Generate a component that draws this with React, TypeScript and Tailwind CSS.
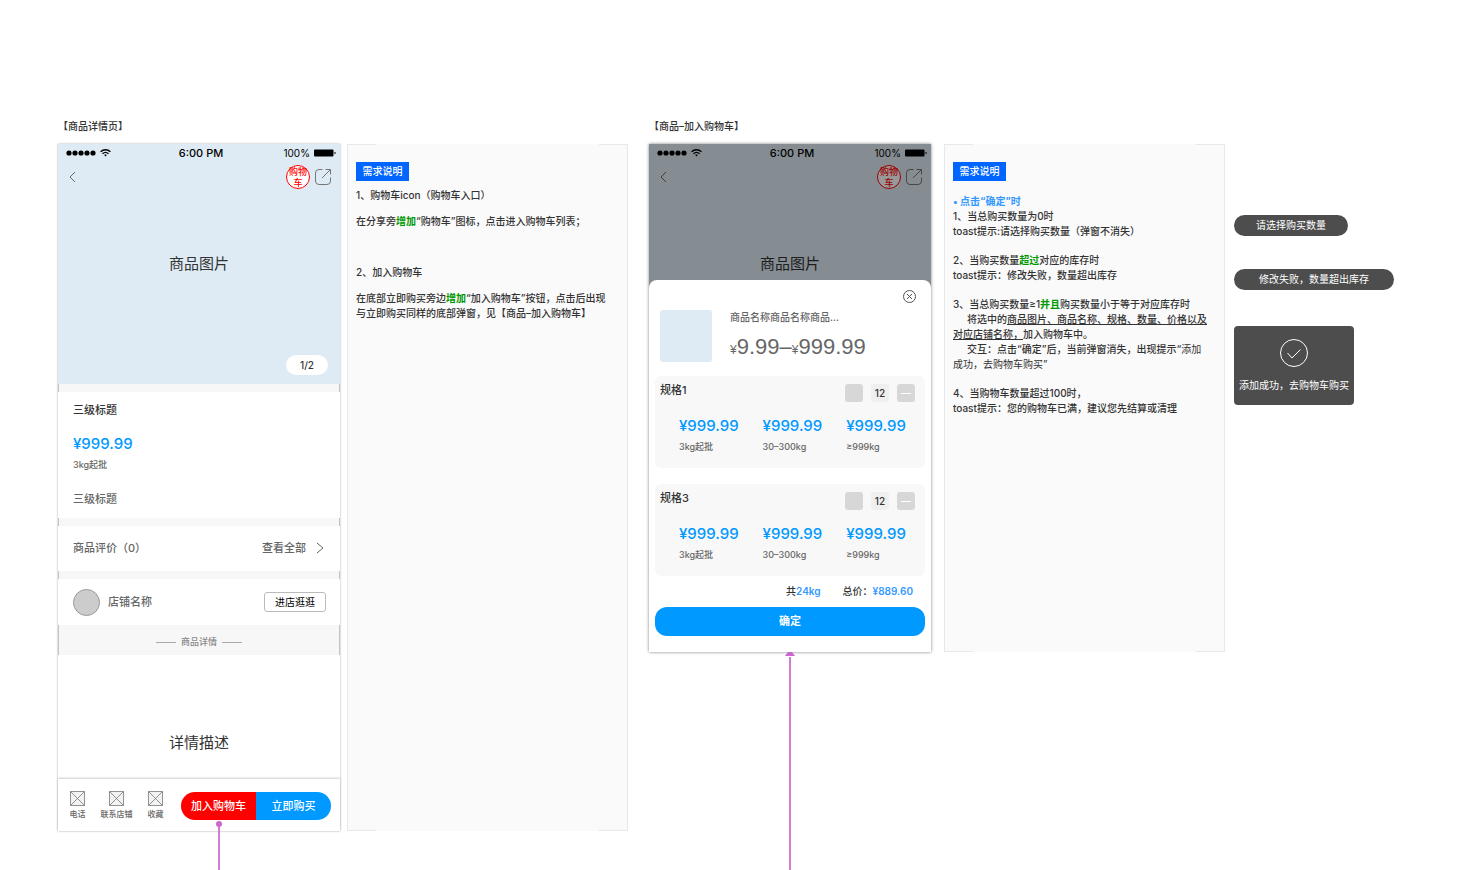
import type { ReactNode } from "react";

const tiers = [
  { price: "¥999.99", range: "3kg起批" },
  { price: "¥999.99", range: "30–300kg" },
  { price: "¥999.99", range: "≥999kg" },
];

const shortcuts = ["电话", "联系店铺", "收藏"];

function StatusBar() {
  return (
    <div className="grid h-[18px] grid-cols-3 items-center pl-2 pr-1 text-black">
      <div className="flex items-center gap-1">
        <svg width="30" height="6" viewBox="0 0 30 6" aria-hidden="true">
          {[3, 9, 15, 21, 27].map((cx) => (
            <circle key={cx} cx={cx} cy="3" r="2.6" />
          ))}
        </svg>
        <svg width="11" height="8" viewBox="0 0 11 8" fill="none" stroke="currentColor" strokeWidth="1.4" aria-hidden="true">
          <path d="M.6 2.7C3.4.1 7.6.1 10.4 2.7M2.5 4.7c1.8-1.6 4.2-1.6 6 0" />
          <path d="M4.2 6 5.5 7.6 6.8 6c-.8-.6-1.8-.6-2.6 0Z" fill="currentColor" stroke="none" />
        </svg>
      </div>
      <span className="text-center text-[11px] font-medium leading-[18px]">6:00 PM</span>
      <div className="flex items-center justify-end gap-1">
        <span className="text-[10px] font-normal leading-[18px]">100%</span>
        <svg width="22" height="8" viewBox="0 0 22 8" aria-hidden="true">
          <rect x="0" y="0.5" width="19.5" height="7" rx="1" />
          <rect x="20.5" y="3" width="1" height="2" />
        </svg>
      </div>
    </div>
  );
}

function Hero({ children }: { children?: ReactNode }) {
  return (
    <div className="flex flex-col bg-[#deebf5]">
      <StatusBar />
      <div className="mt-[3px] flex h-6 items-center pl-[11px] pr-[9px]">
        <button aria-label="返回">
          <svg width="7" height="12" viewBox="0 0 7 12" fill="none" stroke="#666" aria-hidden="true">
            <path d="M6 1 1 6l5 5" />
          </svg>
        </button>
        <button className="ml-auto flex h-6 w-6 items-center justify-center rounded-full border border-[#f00] bg-white text-[9px] leading-[11px] text-[#f00]">
          <span className="-mx-1">
            购物
            <br />车
          </span>
        </button>
        <button aria-label="分享" className="ml-[5px]">
          <svg width="16" height="16" viewBox="0 0 16 16" fill="none" stroke="#777" aria-hidden="true">
            <path d="M7.5.5H4A3.5 3.5 0 0 0 .5 4v8A3.500 3.500 0 0 0 4 15.500h8a3.500 3.500 0 0 0 3.500-3.500V8.500M10.500.5h5v5M15.500.5 7 9" />
          </svg>
        </button>
      </div>
      <p className="mt-[65px] text-center text-[15px] font-normal leading-5 text-[#333]">商品图片</p>
      {children}
    </div>
  );
}

function Strip({ children }: { children?: ReactNode }) {
  return (
    <div className="flex min-h-2 items-center justify-center border-x border-[#c4c4c4] bg-[#f7f7f7]">{children}</div>
  );
}

function DetailPhone() {
  return (
    <div className="flex flex-col bg-white font-medium text-[#666] shadow-[0_0_2px_rgba(0,0,0,0.35)]">
      <Hero>
        <span className="mb-[9px] mr-3 mt-[81px] self-end rounded-full bg-white px-[14px] text-[10px] leading-5 text-[#333]">
          1/2
        </span>
      </Hero>
      <Strip />
      <div className="px-[15px] pb-[11px] pt-[10px]">
        <h3 className="text-[11px] leading-4 text-[#333]">三级标题</h3>
        <p className="mt-4 text-[15px] leading-5 text-[#0099ff]">¥999.99</p>
        <p className="mt-1 text-[9px] leading-[14px]">3kg起批</p>
        <p className="mt-[19px] text-[11px] leading-4">三级标题</p>
      </div>
      <Strip />
      <div className="flex h-[45px] items-center pb-[2px] pl-[15px] pr-4 text-[11px] leading-4">
        <span>商品评价（0）</span>
        <a href="#reviews" className="ml-auto flex items-center gap-[10px]">
          查看全部
          <svg width="8" height="12" viewBox="0 0 8 12" fill="none" stroke="#666" aria-hidden="true">
            <path d="m1 1 6 5-6 5" />
          </svg>
        </a>
      </div>
      <Strip />
      <div className="flex h-[46px] items-center pl-[15px] pr-[14px]">
        <span className="h-[27px] w-[27px] rounded-full border border-[#999] bg-[#ccc]" />
        <span className="ml-2 text-[11px] leading-4">店铺名称</span>
        <button className="ml-auto h-5 rounded-[3px] border border-[#bbb] px-[10px] text-[10px] font-normal leading-[18px] text-black">
          进店逛逛
        </button>
      </div>
      <Strip>
        <div className="flex h-[30px] items-center gap-[5px] pt-1 text-[9px] leading-4 text-[#888]">
          <span className="h-px w-5 bg-[#aaa]" />
          商品详情
          <span className="h-px w-5 bg-[#aaa]" />
        </div>
      </Strip>
      <p className="grow pb-[26px] pt-[78px] text-center text-[15px] font-normal leading-5 text-[#333]">详情描述</p>
      <div className="flex h-[52px] items-end pb-[11px] pr-[9px] shadow-[0_-1px_2px_rgba(0,0,0,0.2)]">
        {shortcuts.map((label) => (
          <button
            key={label}
            className="flex w-[39px] flex-col items-center gap-[2px] whitespace-nowrap text-[8px] leading-3"
          >
            <svg width="15" height="15" viewBox="0 0 15 15" fill="#f2f2f2" stroke="#777" strokeWidth="0.8" aria-hidden="true">
              <path d="M.5.5h14v14H.5zM.5.5l14 14M14.500.5l-14 14" />
            </svg>
            {label}
          </button>
        ))}
        <div className="ml-auto flex h-7 w-[150px] text-[11px] text-white">
          <button className="relative flex-1 rounded-l-full bg-[#f00]">
            加入购物车
            <span className="absolute left-1/2 top-full flex h-[50px] w-[6px] -translate-x-1/2 flex-col items-center pt-px">
              <span className="h-[6px] w-[6px] shrink-0 rounded-full bg-[#cc66cc]" />
              <span className="w-[2px] grow bg-[#d27dd8]" />
            </span>
          </button>
          <button className="flex-1 rounded-r-full bg-[#0099ff]">立即购买</button>
        </div>
      </div>
    </div>
  );
}

function SpecCard({ name }: { name: string }) {
  return (
    <div className="h-[92px] rounded-md bg-[#f8f8f8] pl-[5px] pr-[10px] pt-2">
      <div className="flex items-start gap-2">
        <h4 className="mr-auto text-[11px] leading-3 text-[#333]">{name}</h4>
        <button aria-label="增加" className="h-[18px] w-[18px] rounded-[3px] bg-[#d7d7d7]" />
        <input
          aria-label={`${name}数量`}
          defaultValue="12"
          className="h-[18px] w-[18px] rounded-[3px] bg-[#efefef] text-center text-[10px] text-[#333]"
        />
        <button aria-label="减少" className="flex h-[18px] w-[18px] items-center justify-center rounded-[3px] bg-[#d7d7d7]">
          <span className="h-px w-[10px] bg-white" />
        </button>
      </div>
      <ul className="mt-[14px] flex gap-6 pl-[19px]">
        {tiers.map((tier) => (
          <li key={tier.range}>
            <p className="text-[15px] leading-5 text-[#0099ff]">{tier.price}</p>
            <p className="mt-1 text-[9px] leading-[14px] text-[#666]">{tier.range}</p>
          </li>
        ))}
      </ul>
    </div>
  );
}

function CartPhone() {
  return (
    <div className="bg-white font-medium shadow-[0_0_3px_rgba(0,0,0,0.5)]">
      <div className="relative h-[144px] bg-[#deebf5]">
        <Hero />
        <div className="absolute inset-0 bg-black/40" />
      </div>
      <div className="relative -mt-2 rounded-t-lg bg-white px-[6px] pb-4 pt-[10px]">
        <div className="flex justify-end pr-[9px]">
          <button aria-label="关闭">
            <svg width="13" height="13" viewBox="0 0 13 13" fill="none" stroke="#555" aria-hidden="true">
              <circle cx="6.5" cy="6.5" r="6" />
              <path d="m4 4 5 5M9 4 4 9" />
            </svg>
          </button>
        </div>
        <div className="mt-[7px] flex h-[52px] pl-[5px] text-[#666]">
          <div className="w-[52px] shrink-0 rounded-[3px] bg-[#deebf5]" />
          <div className="ml-[18px]">
            <p className="text-[10px] leading-[14px]">商品名称商品名称商品...</p>
            <p className="mt-[10px] font-['Liberation_Sans'] text-[22px] font-normal leading-[26px]">
              <span className="text-xs">¥</span>9.99–<span className="text-xs">¥</span>999.99
            </p>
          </div>
        </div>
        <div className="mt-[14px] flex flex-col gap-4">
          <SpecCard name="规格1" />
          <SpecCard name="规格3" />
        </div>
        <div className="mt-[7px] flex justify-end gap-[22px] pr-3 text-[10px] leading-4 text-[#333]">
          <span>
            共<b className="font-semibold text-[#3399ff]">24kg</b>
          </span>
          <span>
            总价：<b className="font-semibold text-[#3399ff]">¥889.60</b>
          </span>
        </div>
        <button className="mt-2 h-[29px] w-full rounded-xl bg-[#0099ff] text-[11px] font-bold text-white">确定</button>
      </div>
    </div>
  );
}

function Note({ children }: { children: ReactNode }) {
  return (
    <aside className="flex flex-col border-x border-[#e8e8e8] bg-[#fafafa] text-[10px] leading-[15px] text-[#333]">
      <div className="flex justify-between">
        <span className="h-px w-7 bg-[#e8e8e8]" />
        <span className="h-px w-7 bg-[#e8e8e8]" />
      </div>
      <div className="grow px-2 pt-[17px] font-medium">
        <h3 className="h-[19px] w-[53px] bg-[#0066ff] text-center leading-[18px] text-white">需求说明</h3>
        {children}
      </div>
      <div className="flex justify-between">
        <span className="h-px w-7 bg-[#e8e8e8]" />
        <span className="h-px w-7 bg-[#e8e8e8]" />
      </div>
    </aside>
  );
}

function Em({ children }: { children: ReactNode }) {
  return <b className="font-bold text-[#009900]">{children}</b>;
}

export default function App() {
  return (
    <main className="flex min-h-screen overflow-hidden bg-white pl-[58px] pt-[118px] font-['Inter','Noto_Sans_CJK_SC',sans-serif]">
      {/* 商品详情页 */}
      <section className="min-w-0 grow-[570] basis-0">
        <h2 className="mb-[10px] text-[10px] font-medium leading-4 text-[#333]">【商品详情页】</h2>
        <div className="grid grid-cols-[282fr_281fr] gap-[7px]">
          <DetailPhone />
          <Note>
            <div className="mt-[7px] flex flex-col gap-[11px]">
              <p>1、购物车icon（购物车入口）</p>
              <p>
                在分享旁<Em>增加</Em>“购物车”图标，点击进入购物车列表；
              </p>
              <p className="mt-[25px]">2、加入购物车</p>
              <p>
                在底部立即购买旁边<Em>增加</Em>“加入购物车”按钮，点击后出现
                <br />
                与立即购买同样的底部弹窗，见【商品–加入购物车】
              </p>
            </div>
          </Note>
        </div>
      </section>

      {/* 加入购物车弹窗 */}
      <section className="ml-[21px] flex min-w-0 grow-[576] basis-0 flex-col">
        <h2 className="mb-[10px] text-[10px] font-medium leading-4 text-[#333]">【商品–加入购物车】</h2>
        <div className="grid grid-cols-[282fr_281fr] gap-[13px]">
          <CartPhone />
          <Note>
            <div className="mt-[13px] flex flex-col gap-[14px]">
              <div>
                <p className="font-bold text-[#3399ff]">• 点击“确定”时</p>
                <p>1、当总购买数量为0时</p>
                <p>toast提示:请选择购买数量（弹窗不消失）</p>
              </div>
              <div>
                <p>
                  2、当购买数量<Em>超过</Em>对应的库存时
                </p>
                <p>toast提示：修改失败，数量超出库存</p>
              </div>
              <div>
                <p>
                  3、当总购买数量≥1<Em>并且</Em>购买数量小于等于对应库存时
                </p>
                <p className="indent-[14px]">
                  将选中的
                  <u>
                    商品图片、商品名称、规格、数量、价格以及
                    <br />
                    对应店铺名称，
                  </u>
                  加入购物车中。
                </p>
                <p className="indent-[14px]">
                  交互：点击“确定”后，当前弹窗消失，出现提示“
                  <span className="font-normal">
                    添加
                    <br />
                    成功，去购物车购买”
                  </span>
                </p>
              </div>
              <div>
                <p>4、当购物车数量超过100时，</p>
                <p>toast提示：您的购物车已满，建议您先结算或清理</p>
              </div>
            </div>
          </Note>
        </div>
        <div className="grid grow grid-cols-[282fr_281fr] gap-[13px]">
          <div className="flex flex-col items-center">
            <svg width="12" height="5" viewBox="0 0 12 5" fill="#cc66cc" aria-hidden="true">
              <path d="M4 0h4l3 4H1z" />
            </svg>
            <span className="w-[2px] grow bg-[#d27dd8]" />
          </div>
        </div>
      </section>

      {/* toast */}
      <section className="ml-[9px] flex min-w-0 grow-[240] basis-0 flex-col items-start whitespace-nowrap pt-[97px] text-[10px] leading-5 text-white">
        <p className="h-[21px] rounded-full bg-[#4d4d4d] px-[22px]">请选择购买数量</p>
        <p className="mt-[33px] h-[21px] rounded-full bg-[#4d4d4d] px-[25px]">修改失败，数量超出库存</p>
        <div className="mt-9 flex h-[79px] flex-col items-center rounded-[4px] bg-[#4d4d4d] px-[5px] pt-[13px]">
          <svg width="28" height="28" viewBox="0 0 28 28" fill="none" stroke="#fff" aria-hidden="true">
            <circle cx="14" cy="14" r="13.500" />
            <path d="m7.500 14 4.500 5 8.500-8.500" />
          </svg>
          <p className="mt-2">添加成功，去购物车购买</p>
        </div>
      </section>
    </main>
  );
}
